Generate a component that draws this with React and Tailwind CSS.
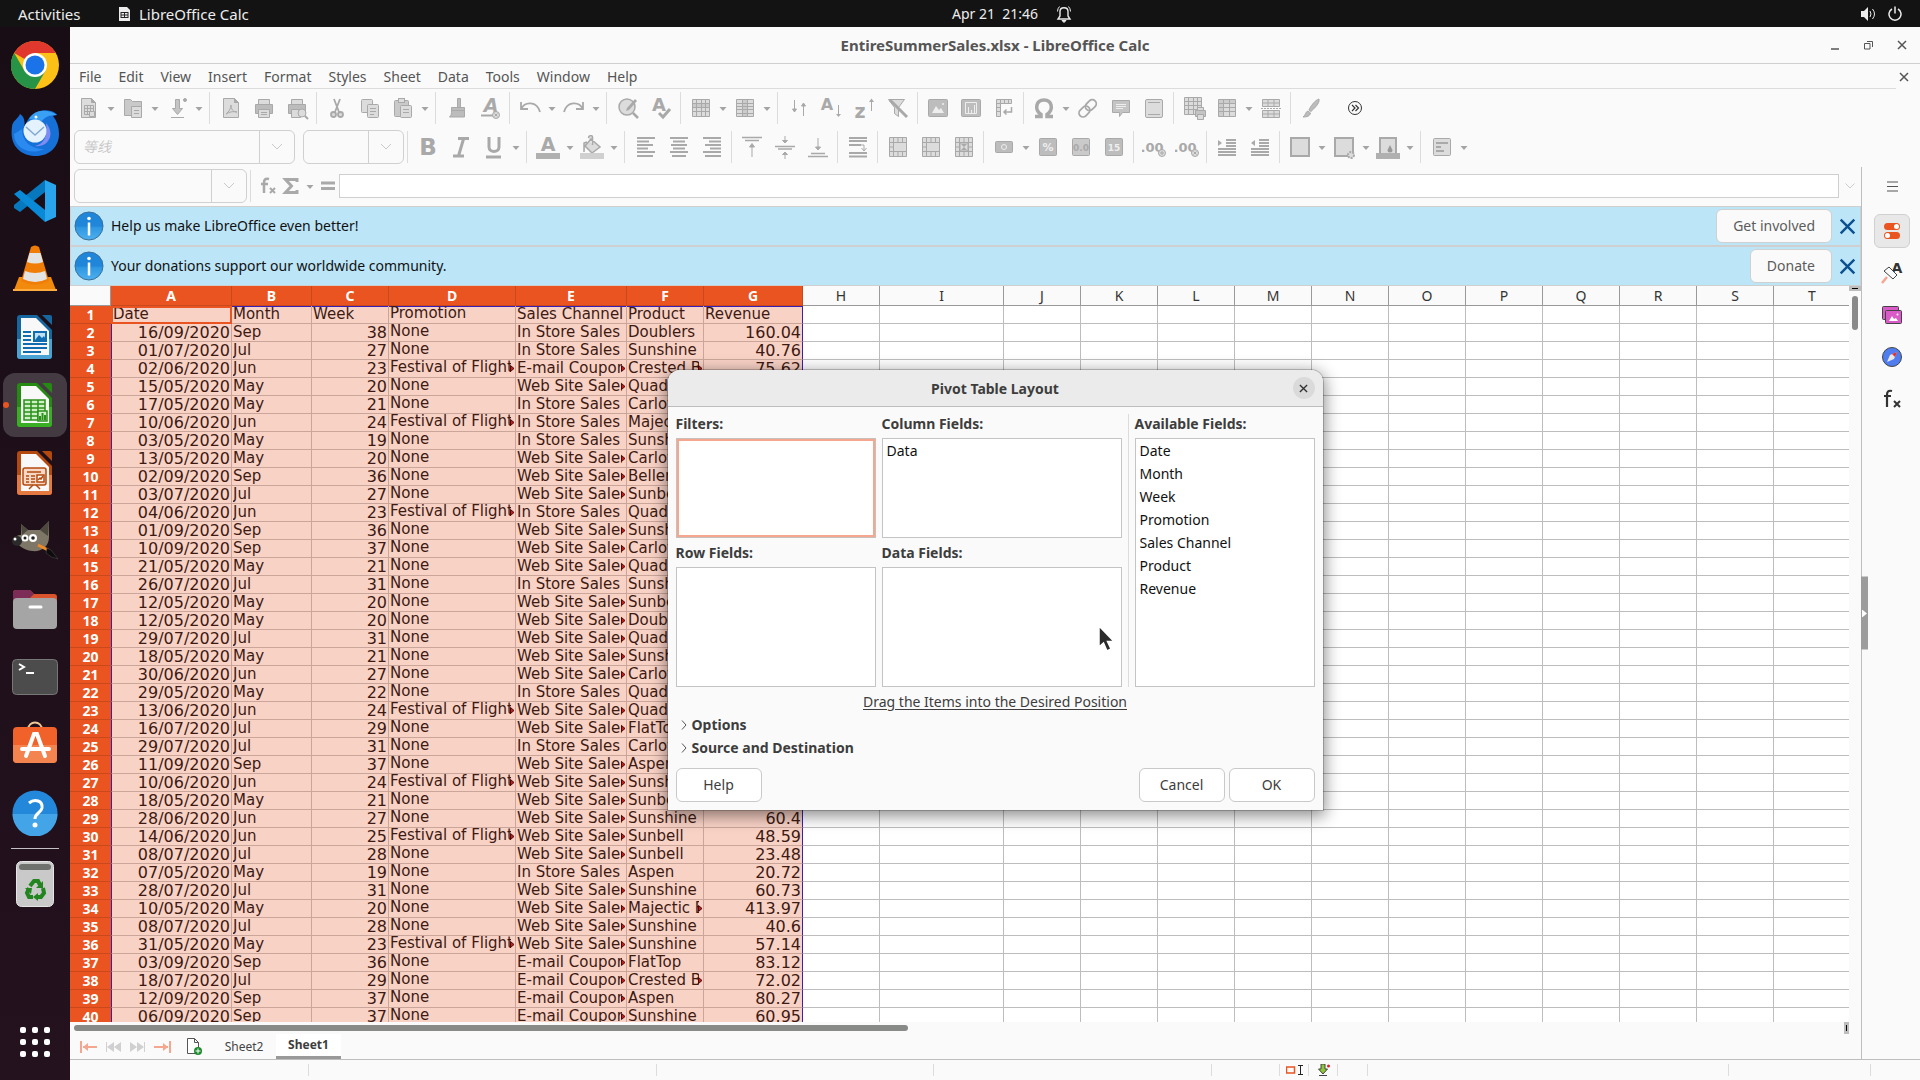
import React, { useState } from 'react';

const F = 'Festival of Flight';
const N = 'None';
const W = 'Web Site Sales';
const S = 'In Store Sales';
const E = 'E-mail Coupon';

// date, month, week, promotion, channel, product, revenue
const rows = [
  ['16/09/2020', 'Sep', 38, N, S, 'Doublers', '160.04'],
  ['01/07/2020', 'Jul', 27, N, S, 'Sunshine', '40.76'],
  ['02/06/2020', 'Jun', 23, F, E, 'Crested Beaut', '75.62'],
  ['15/05/2020', 'May', 20, N, W, 'Quad', ''],
  ['17/05/2020', 'May', 21, N, S, 'Carlota', ''],
  ['10/06/2020', 'Jun', 24, F, S, 'Majectic Beaut', ''],
  ['03/05/2020', 'May', 19, N, S, 'Sunshine', ''],
  ['13/05/2020', 'May', 20, N, W, 'Carlota', ''],
  ['02/09/2020', 'Sep', 36, N, W, 'Bellen', ''],
  ['03/07/2020', 'Jul', 27, N, W, 'Sunbell', ''],
  ['04/06/2020', 'Jun', 23, F, S, 'Quad', ''],
  ['01/09/2020', 'Sep', 36, N, W, 'Sunshine', ''],
  ['10/09/2020', 'Sep', 37, N, W, 'Carlota', ''],
  ['21/05/2020', 'May', 21, N, W, 'Quad', ''],
  ['26/07/2020', 'Jul', 31, N, S, 'Sunshine', ''],
  ['12/05/2020', 'May', 20, N, W, 'Sunbell', ''],
  ['12/05/2020', 'May', 20, N, W, 'Doublers', ''],
  ['29/07/2020', 'Jul', 31, N, W, 'Quad', ''],
  ['18/05/2020', 'May', 21, N, W, 'Sunshine', ''],
  ['30/06/2020', 'Jun', 27, N, W, 'Carlota', ''],
  ['29/05/2020', 'May', 22, N, S, 'Quad', ''],
  ['13/06/2020', 'Jun', 24, F, W, 'Quad', ''],
  ['16/07/2020', 'Jul', 29, N, W, 'FlatTop', ''],
  ['29/07/2020', 'Jul', 31, N, S, 'Carlota', ''],
  ['11/09/2020', 'Sep', 37, N, W, 'Aspen', ''],
  ['10/06/2020', 'Jun', 24, F, W, 'Sunshine', ''],
  ['18/05/2020', 'May', 21, N, W, 'Sunbell', ''],
  ['28/06/2020', 'Jun', 27, N, W, 'Sunshine', '60.4'],
  ['14/06/2020', 'Jun', 25, F, W, 'Sunbell', '48.59'],
  ['08/07/2020', 'Jul', 28, N, W, 'Sunbell', '23.48'],
  ['07/05/2020', 'May', 19, N, S, 'Aspen', '20.72'],
  ['28/07/2020', 'Jul', 31, N, W, 'Sunshine', '60.73'],
  ['10/05/2020', 'May', 20, N, W, 'Majectic Beaut', '413.97'],
  ['08/07/2020', 'Jul', 28, N, W, 'Sunshine', '40.6'],
  ['31/05/2020', 'May', 23, F, W, 'Sunshine', '57.14'],
  ['03/09/2020', 'Sep', 36, N, E, 'FlatTop', '83.12'],
  ['18/07/2020', 'Jul', 29, N, E, 'Crested Beaut', '72.02'],
  ['12/09/2020', 'Sep', 37, N, E, 'Aspen', '80.27'],
  ['06/09/2020', 'Sep', 37, N, E, 'Sunshine', '60.95'],
];

const header = ['Date', 'Month', 'Week', 'Promotion', 'Sales Channel', 'Product', 'Revenue'];
const fields = header;
const emptyCols = ['H', 'I', 'J', 'K', 'L', 'M', 'N', 'O', 'P', 'Q', 'R', 'S', 'T'];
const menus = ['File', 'Edit', 'View', 'Insert', 'Format', 'Styles', 'Sheet', 'Data', 'Tools', 'Window', 'Help'];

const D = '#a9a9a9';
const L = '#dcdcdc';

const Glyph = ({ x = 12, y = 18, size = 19, children, italic, fill = D }) => (
  <text x={x} y={y} fontSize={size} fontWeight="700" fontStyle={italic ? 'italic' : 'normal'} textAnchor="middle" fill={fill} fontFamily="DejaVu Sans, sans-serif">
    {children}
  </text>
);

const Badge = ({ x, y, plus }) => (
  <g>
    <circle cx={x} cy={y} r="3.5" fill={L} stroke={D} />
    <path d={plus ? `M${x - 2} ${y}h4M${x} ${y - 2}v4` : `M${x - 1.5} ${y - 1.5}l3 3m0-3l-3 3`} stroke={D} />
  </g>
);

const lines = (list) => <path d={list.map(([x, y, w]) => `M${x} ${y}h${w}`).join('')} stroke={D} strokeWidth="1.8" />;

const icons = {
  newDoc: (
    <g fill={L} stroke={D}>
      <path d="M4.5 2.5h10l4 4v15h-14z" />
      <path d="M14.5 2.5v4h4" fill={D} />
      <path d="M7.5 9.5h9v9h-9zM7.5 12.5h9M7.5 15.5h9M10.5 9.5v9M13.5 9.5v9" />
      <path d="M12.5 15.5h5v5h-5z" />
    </g>
  ),
  open: (
    <g fill={L} stroke={D}>
      <path d="M3.5 19.5v-16h6l2 2h9v14z" fill="#c9c9c9" />
      <path d="M10.5 10.5h10v11h-10z" />
      <path d="M13 14.5h5M13 17.5h5" />
    </g>
  ),
  save: (
    <g fill={D} stroke={D}>
      <path d="M10.5 3.5h4v9h3l-5 6-5-6h3z" fill="#c4c4c4" />
      <path d="M6 21.5h13" />
      <circle cx="20" cy="4" r="1.5" />
    </g>
  ),
  pdf: (
    <g fill={L} stroke={D}>
      <path d="M4.5 2.5h11l4 4v15h-15z" />
      <path d="M15.5 2.5v4h4" fill={D} />
      <path d="M7 18c3-2 5-6 5-9 0 4 2 7 6 7-4-1-8 0-11 2z" fill="none" />
    </g>
  ),
  print: (
    <g fill={L} stroke={D}>
      <path d="M6.5 3.5h11v5h-11z" />
      <path d="M3.5 8.5h17v9h-17z" fill="#bcbcbc" />
      <path d="M6.5 13.5h11v8h-11zM9 16.5h6M9 18.5h6" />
    </g>
  ),
  preview: (
    <g fill={L} stroke={D}>
      <path d="M6.5 3.5h11v5h-11z" />
      <path d="M3.5 8.5h17v9h-17z" fill="#bcbcbc" />
      <path d="M6.5 13.5h9v8h-9z" />
      <circle cx="17" cy="17" r="4" />
      <path d="M20 20l3 3" strokeWidth="2" />
    </g>
  ),
  cut: (
    <g fill={L} stroke={D} strokeWidth="1.8">
      <path d="M9 3l5 13M15 3l-5 13" />
      <circle cx="8.5" cy="18.5" r="2.5" />
      <circle cx="15.5" cy="18.5" r="2.5" />
    </g>
  ),
  copy: (
    <g fill={L} stroke={D}>
      <rect x="3.5" y="3.5" width="11" height="13" rx="1" />
      <rect x="9.5" y="8.5" width="11" height="13" rx="1" />
      <path d="M12 12.5h6M12 15.5h6M12 18.5h4" />
    </g>
  ),
  paste: (
    <g fill={L} stroke={D}>
      <rect x="3.5" y="4.5" width="14" height="16" rx="1" fill="#c9c9c9" />
      <rect x="7.5" y="2.5" width="6" height="4" />
      <rect x="9.5" y="9.5" width="11" height="12" rx="1" />
      <path d="M12 13.5h6M12 16.5h6" />
    </g>
  ),
  clone: (
    <g fill="#bcbcbc" stroke={D}>
      <path d="M12.5 2.5h3v9h-3z" />
      <path d="M6.5 11.5h13v3h-13zM6.5 14.5h13v6.5h-15c2-2 2-3 2-6.5z" />
    </g>
  ),
  clear: (
    <g>
      <Glyph italic x={13} y={16} size={19}>A</Glyph>
      <path d="M3 19.5h12" stroke={D} strokeWidth="2" />
      <Badge x={18} y={19} />
    </g>
  ),
  undo: <path d="M3 6v7h7M3 13c4-8 16-8 19 3" fill="none" stroke={D} strokeWidth="1.8" />,
  redo: <path d="M21 6v7h-7M21 13c-4-8-16-8-19 3" fill="none" stroke={D} strokeWidth="1.8" />,
  find: (
    <g fill={L} stroke={D} strokeWidth="1.5">
      <circle cx="11" cy="11" r="8" />
      <path d="M17 17l5 5" strokeWidth="2.5" />
      <path d="M19 3l-8 9-1 3 3-1 8-9z" fill={D} stroke="none" />
    </g>
  ),
  spell: (
    <g>
      <Glyph x={10} y={15} size={18}>A</Glyph>
      <path d="M10 17l4 4 7-8" fill="none" stroke={D} strokeWidth="3" />
    </g>
  ),
  row: (
    <g fill={L} stroke={D}>
      <path d="M3.5 3.5h17v17h-17zM3.5 7.5h17M3.5 11.5h17M3.5 15.5h17M7.5 3.5v17M12.5 3.5v17M16.5 3.5v17" />
      <path d="M4 8h16v3H4z" fill={D} fillOpacity=".35" stroke="none" />
    </g>
  ),
  col: (
    <g fill={L} stroke={D}>
      <path d="M3.5 3.5h17v17h-17zM3.5 7.5h17M3.5 10.5h17M3.5 13.5h17M3.5 17.5h17M9.5 3.5v17M14.5 3.5v17" />
      <path d="M10 4h4v16h-4z" fill={D} fillOpacity=".35" stroke="none" />
    </g>
  ),
  sort: (
    <g fill={D} stroke={D}>
      <path d="M7.5 4v11M16.5 9v11" />
      <path d="M5.5 13h4l-2 3zM14.5 10h4l-2-3z" />
    </g>
  ),
  asc: (
    <g fill={D}>
      <Glyph x={7} y={14} size={16}>A</Glyph>
      <path d="M18.5 9v11" stroke={D} />
      <path d="M16 18h5l-2.500 3z" />
    </g>
  ),
  desc: (
    <g fill={D}>
      <Glyph x={7} y={22} size={19}>z</Glyph>
      <path d="M18.5 3v12" stroke={D} />
      <path d="M16 6h5l-2.500-3.500z" />
    </g>
  ),
  filter: (
    <g fill={L} stroke={D}>
      <path d="M2.5 3.5h16l-6 8v9l-4-3v-6z" />
      <path d="M4 4l17 17" strokeWidth="3" />
    </g>
  ),
  image: (
    <g>
      <rect x="2.5" y="3.5" width="19" height="17" rx="1" fill="#bdbdbd" stroke={D} />
      <path d="M6 17l4-7 3 4 2-2 3 5z" fill="#eee" />
      <circle cx="17" cy="8" r="1" fill="#eee" />
    </g>
  ),
  chart: (
    <g>
      <rect x="2.5" y="3.5" width="19" height="17" rx="1" fill="#bdbdbd" stroke={D} />
      <path d="M6.5 6.5v11h11M6.5 6.5h11v11M9.5 17v-6M12.5 17v-3M15.5 17V9" fill="none" stroke="#eee" />
    </g>
  ),
  pivot: (
    <g fill={L} stroke={D}>
      <path d="M4.5 3.5h15v4h-11v13h-4zM8.5 3.5v4h-4M12.5 3.5v4M16.5 3.5v4M4.5 11.5h4M4.5 15.5h4" />
      <path d="M19.5 11v5h-7m2-2.500l-2.500 2.500 2.500 2.500" fill="none" strokeWidth="1.5" />
    </g>
  ),
  omega: <path d="M3 20.5h6v-2c-7-5-5-14.500 3-14.500s10 9.500 3 14.500v2h6" fill="none" stroke={D} strokeWidth="3.500" />,
  link: (
    <g fill="none" stroke={D} strokeWidth="1.8" transform="rotate(-45 12 12)">
      <rect x="1" y="8" width="12" height="8" rx="4" />
      <rect x="10" y="8" width="12" height="8" rx="4" />
    </g>
  ),
  comment: (
    <g fill="#c4c4c4" stroke={D}>
      <path d="M3.5 4.5h17v12h-7l-3 4v-4h-7z" />
      <path d="M7 8.5h10M7 10.5h10M7 12.5h7" stroke="#eee" />
    </g>
  ),
  headfoot: (
    <g fill={L} stroke={D}>
      <rect x="3.5" y="3.5" width="17" height="18" rx="1.5" />
      <path d="M6 6.5h12M6 18.5h12" />
    </g>
  ),
  printArea: (
    <g fill={L} stroke={D}>
      <path d="M2.5 1.5h17v17h-17zM2.5 5.5h17M2.5 9.5h17M2.5 13.5h17M6.5 1.5v17M11.5 1.5v17M15.5 1.5v17" />
      <path d="M13.5 14.5h10v6h-10z" fill="#c4c4c4" />
      <path d="M15.5 11.5h6v3h-6zM15.5 18.5h6v5h-6z" />
    </g>
  ),
  freeze: (
    <g fill={L} stroke={D}>
      <path d="M3.5 3.5h17v17h-17zM3.5 7.5h17M3.5 11.5h17M3.5 15.5h17M8.5 3.5v17M14.5 3.5v17" />
      <path d="M4 4h16v3H4zM4 8h4v12H4z" fill={D} fillOpacity=".3" stroke="none" />
    </g>
  ),
  split: (
    <g fill={L} stroke={D}>
      <path d="M3.5 3.5h17v7h-17zM3.5 7h17M9 3.5v7M15 3.5v7M3.5 14.5h17v7h-17zM3.5 18h17M9 14.5v7M15 14.5v7" />
      <path d="M2 12.5h20" strokeDasharray="2 1" />
    </g>
  ),
  draw: <path d="M20 3c-4 1-9 8-10 11l2 1.500c3-3 9-8 8-12.500zM9 15c-3 1-2 4-5 6 4 0 7-1 7.500-4z" fill="#bcbcbc" stroke={D} />,
  bold: <Glyph y={20} size={23}>B</Glyph>,
  italic: <path d="M9 3.500h11M4 21h11M14.500 4L9.500 21" stroke={D} strokeWidth="3" />,
  underline: <path d="M7 2v10c0 6 10 6 10 0V2M4 22h15" fill="none" stroke={D} strokeWidth="3" />,
  fontColor: (
    <g>
      <Glyph y={16} size={19}>A</Glyph>
      <path d="M0 18h24v6H0z" fill="#b0b0b0" />
    </g>
  ),
  fillColor: (
    <g fill={L} stroke={D} strokeWidth="1.500">
      <path d="M11 4l9 8-8 6-7-7zM12.500 10V2c0-2-4-2-4 1M4 17V8l3-1" />
      <path d="M0 18h24v6H0z" fill="#d0d0d0" stroke="none" />
    </g>
  ),
  alignL: lines([[3, 3, 18], [3, 6.5, 12], [3, 10, 16], [3, 13.5, 11], [3, 17, 18], [3, 21, 16]]),
  alignC: lines([[3, 3, 18], [6, 6.5, 12], [4, 10, 16], [6, 13.5, 12], [3, 17, 18], [5, 21, 14]]),
  alignR: lines([[3, 3, 18], [9, 6.5, 12], [5, 10, 16], [10, 13.5, 11], [3, 17, 18], [5, 21, 16]]),
  top: (
    <g fill={D} stroke={D}>
      <path d="M2 2.5h20M5 5.5h14" strokeWidth="1.500" />
      <path d="M12 10v12M9.500 12h5L12 8.5z" />
    </g>
  ),
  middle: (
    <g fill={D} stroke={D}>
      <path d="M2 11.5h20M5 14h14" strokeWidth="1.500" />
      <path d="M12 1v6M12 18v6M9.500 5.5h5L12 8zM9.500 19.5h5L12 17z" />
    </g>
  ),
  bottom: (
    <g fill={D} stroke={D}>
      <path d="M5 18.5h14M2 21.5h20" strokeWidth="1.500" />
      <path d="M12 3v11M9.500 12h5L12 15z" />
    </g>
  ),
  wrap: (
    <g fill="none" stroke={D} strokeWidth="1.8">
      <path d="M3 3h18M3 6h18M3 10h12M3 18h18M3 21.5h18" />
      <path d="M8 10h10v5m-2.500-2l2.500 3 2.500-3" strokeWidth="1" />
    </g>
  ),
  merge: (
    <g fill={L} stroke={D}>
      <path d="M3.5 2.5h17v19h-17zM3.5 7.5h17M3.5 16.5h17M3.5 12h4M7.5 2.5v19M12 2.5v5M12 16.5v5M16.5 2.5v5M16.5 16.5v5" />
    </g>
  ),
  mergeMid: (
    <g fill={L} stroke={D}>
      <path d="M3.5 2.5h17v19h-17zM3.5 7.5h17M3.5 16.5h17M3.5 12h17M7.5 2.5v19M12 2.5v19M16.5 2.5v19" />
      <path d="M8 8h8v8H8z" />
      <path d="M9 9h6l-3 3 3 3H9l3-3z" fill={D} stroke="none" />
    </g>
  ),
  currency: (
    <g>
      <rect x="3.5" y="6.5" width="17" height="11" rx="1" fill="#bdbdbd" stroke={D} />
      <circle cx="12" cy="12" r="2.5" fill="none" stroke="#eee" />
    </g>
  ),
  percent: (
    <g>
      <rect x="3.5" y="3.5" width="17" height="17" rx="1" fill="#bdbdbd" stroke={D} />
      <Glyph y={16} size={11} fill="#eee">%</Glyph>
    </g>
  ),
  number: (
    <g>
      <rect x="3.5" y="3.5" width="17" height="17" rx="1" fill="#cacaca" stroke={D} />
      <Glyph y={16} size={9}>0.0</Glyph>
    </g>
  ),
  date: (
    <g>
      <rect x="3.5" y="3.5" width="17" height="17" rx="1" fill="#bdbdbd" stroke={D} />
      <Glyph y={16} size={9} fill="#eee">15</Glyph>
    </g>
  ),
  addDec: (
    <g>
      <Glyph x={10} y={17} size={13}>.00</Glyph>
      <Badge x={20} y={18} plus />
    </g>
  ),
  delDec: (
    <g>
      <Glyph x={10} y={17} size={13}>.00</Glyph>
      <Badge x={20} y={18} />
    </g>
  ),
  indent: (
    <g fill={D}>
      {lines([[11, 5, 10], [11, 8, 10], [11, 11, 10], [3, 14, 18], [3, 17, 18], [3, 20, 18]])}
      <path d="M3 5v6l4-3z" />
    </g>
  ),
  outdent: (
    <g fill={D}>
      {lines([[11, 5, 10], [11, 8, 10], [11, 11, 10], [3, 14, 18], [3, 17, 18], [3, 20, 18]])}
      <path d="M7 5v6L3 8z" />
    </g>
  ),
  borders: <path d="M3 3h18v18H3z" fill={L} stroke={D} strokeWidth="2" />,
  borderStyle: (
    <g>
      <path d="M3 3h18v18H3z" fill={L} stroke={D} strokeWidth="2" />
      <circle cx="19" cy="20" r="3" fill={L} stroke={D} strokeWidth="2" strokeDasharray="2 1" />
    </g>
  ),
  borderColor: (
    <g>
      <path d="M4 3h16v16H4z" fill={L} stroke={D} strokeWidth="2" />
      <path d="M14 10l2.500 5a2.500 2.500 0 1 1-5 0z" fill="#999" />
      <path d="M0 18h24v6H0z" fill="#b0b0b0" />
    </g>
  ),
  conditional: (
    <g>
      <rect x="3.5" y="3.5" width="17" height="17" rx="1" fill={L} stroke={D} />
      <path d="M6 8h12M6 12h5M6 16h8" stroke={D} strokeWidth="2" />
    </g>
  ),
  fx: (
    <g>
      <path d="M12 5c-4-1-5 1-5 4v10M4 10h7" fill="none" stroke={D} strokeWidth="2.500" />
      <path d="M13 14l5 5m0-5l-5 5" stroke={D} strokeWidth="2" />
    </g>
  ),
  sum: <path d="M18 8V5.5H6.5l6 6.500-6 6.500H18V16" fill="none" stroke={D} strokeWidth="3" />,
  equals: <path d="M5 9h14M5 14.500h14" stroke={D} strokeWidth="3" />,
};

// "v" is a drop arrow, "|" a separator, "||" a separator that follows a drop arrow
const standardBar = ['newDoc', 'v', 'open', 'v', 'save', 'v', '||', 'pdf', 'print', 'preview', '|', 'cut', 'copy', 'paste', 'v', '||', 'clone', 'clear', '|', 'undo', 'v', 'redo', 'v', '||', 'find', 'spell', '|', 'row', 'v', 'col', 'v', '||', 'sort', 'asc', 'desc', 'filter', '|', 'image', 'chart', 'pivot', '|', 'omega', 'v', 'link', 'comment', 'headfoot', '|', 'printArea', 'freeze', 'v', 'split', '|', 'draw'];
const formatBar = ['|', 'bold', 'italic', 'underline', 'v', '||', 'fontColor', 'v', 'fillColor', 'v', '||', 'alignL', 'alignC', 'alignR', '|', 'top', 'middle', 'bottom', '|', 'wrap', '|', 'merge', 'merge', 'mergeMid', '|', 'currency', 'v', 'percent', 'number', 'date', '|', 'addDec', 'delDec', '|', 'indent', 'outdent', '|', 'borders', 'v', 'borderStyle', 'v', 'borderColor', 'v', '||', 'conditional', 'v'];

const Tool = ({ name }) => (
  <button type="button" aria-label={name} className="flex w-[33px] h-8 shrink-0 items-center justify-center">
    <svg width="24" height="24" viewBox="0 0 24 24">{icons[name]}</svg>
  </button>
);

const DropArrow = () => (
  <button type="button" aria-label="more" className="flex w-[11px] h-8 shrink-0 items-center justify-center">
    <svg width="8" height="8" viewBox="0 0 8 8"><path d="M0.5 3h7L4 7z" fill="#a4a4a4" /></svg>
  </button>
);

const Bar = ({ items }) => items.map((item, i) => {
  if (item === 'v') return <DropArrow key={i} />;
  if (item === '|') return <span key={i} className="w-[7px] shrink-0 h-8 flex justify-center"><span className="w-px bg-[#dcdcdc]" /></span>;
  if (item === '||') return <span key={i} className="w-[10px] shrink-0 h-8 flex justify-center"><span className="w-px bg-[#dcdcdc]" /></span>;
  return <Tool key={i} name={item} />;
});

const Combo = ({ label, value, width }) => (
  <div className={`flex h-[34px] shrink-0 rounded-md border border-[#d0d0d0] bg-[#fafafa] ${width}`}>
    <input aria-label={label} defaultValue={value} className="min-w-0 flex-1 px-2 text-sm italic text-[#c8c8c8] outline-none" />
    <button type="button" aria-label={label + ' list'} className="flex w-[35px] items-center justify-center border-l border-[#d0d0d0]">
      <svg width="12" height="8" viewBox="0 0 12 8"><path d="M1 1l5 5 5-5" fill="none" stroke="#c8c8c8" /></svg>
    </button>
  </div>
);

const Cross = ({ size = 10, color = '#555', stroke = 1.5 }) => (
  <svg width={size} height={size} viewBox="0 0 10 10"><path d="M1 1l8 8M9 1L1 9" stroke={color} strokeWidth={stroke} /></svg>
);

const InfoBar = ({ text, action }) => (
  <div className="flex h-10 shrink-0 items-center border border-[#cfcfcf] bg-[#bce5f7] pl-[3px] pr-1">
    <svg width="30" height="30" viewBox="0 0 30 30" className="mr-[7px]">
      <defs>
        <linearGradient id="info" x1="0" y1="0" x2="0" y2="1">
          <stop offset="0.5" stopColor="#1f86da" />
          <stop offset="0.55" stopColor="#2f97e2" />
          <stop offset="1" stopColor="#4eb0ee" />
        </linearGradient>
      </defs>
      <circle cx="15" cy="15" r="14" fill="url(#info)" stroke="#3a6f9a" />
      <circle cx="15" cy="7.5" r="1.8" fill="#fff" />
      <path d="M15 11.5v13" stroke="#fff" strokeWidth="2.5" />
    </svg>
    <span className="flex-1 text-sm text-[#111]">{text}</span>
    <button type="button" className="h-[34px] rounded-md border border-[#d0d0d0] bg-[#fafafa] px-4 text-sm text-[#5c5c5c]">{action}</button>
    <button type="button" aria-label="Close" className="ml-[7px]">
      <Cross size={17} color="#0a4f8f" stroke={1.4} />
    </button>
  </div>
);

const docIcon = (dark, light, inner) => (
  <svg width="48" height="48" viewBox="0 0 48 48">
    <path d="M9 2h17l15 15v26q0 3-3 3H9q-3 0-3-3V5q0-3 3-3z" fill={dark} />
    <path d="M6 26h35v17q0 3-3 3H9q-3 0-3-3z" fill={light} />
    <path d="M10 5h15l13 13v24H10z" fill="#f8f8f8" />
    <path d="M31 2h8q2 0 2 2v8z" fill={dark} />
    {inner}
  </svg>
);

const dockApps = [
  ['Google Chrome', (
    <svg width="48" height="48" viewBox="0 0 48 48">
      <circle cx="24" cy="24" r="24" fill="#fbc116" />
      <path d="M24 24L3.2 12A24 24 0 0 1 44.8 12H24z" fill="#e0382c" />
      <path d="M3.2 12A24 24 0 0 0 24 48l10.400-18L24 24 13.600 30z" fill="#269347" />
      <circle cx="24" cy="24" r="12" fill="#fff" />
      <circle cx="24" cy="24" r="9.5" fill="#1a73e8" />
    </svg>
  )],
  ['Thunderbird', (
    <svg width="48" height="48" viewBox="0 0 48 48">
      <path d="M1 18c0-6 6-8 8-13 6 4 4 10 5 13C17 4 30-1 40 2c3 1 5 2 6 4l-4 1c4 5 6 11 6 18 0 13-10 22-23 22S-2 39 1 18z" fill="#1570d8" />
      <path d="M18 10c5-9 17-11 28-4-8 0-12 2-15 6z" fill="#3aa0f4" />
      <path d="M3 25c0 14 16 22 30 15-14 0-22-8-22-20z" fill="#2a8af0" />
      <path d="M35 14c10 11 2 25-11 23 9-2 13-10 11-23z" fill="#7f8df2" />
      <circle cx="24" cy="22" r="11.5" fill="#e3f2fd" />
      <path d="M15 18l9 8 9-8" fill="none" stroke="#84a9cf" strokeWidth="1.5" />
      <circle cx="25" cy="8" r="1.5" fill="#fff" />
    </svg>
  )],
  ['Visual Studio Code', (
    <svg width="42" height="42" viewBox="0 0 42 42">
      <path d="M31 0v12L6 32 0 28v-3z" fill="#0878be" />
      <path d="M0 14l6-4 25 20v12z" fill="#0a8ad6" />
      <path d="M31 0l11 5v32l-11 5z" fill="#29a5ee" />
    </svg>
  )],
  ['VLC', (
    <svg width="46" height="48" viewBox="0 0 46 48">
      <path d="M7 32h32l5 13H2z" fill="#f18a0d" />
      <path d="M19 2q4-3 8 0l10 34q-14 7-28 0z" fill="#f07d08" />
      <path d="M17.5 8h11l2.500 9q-8 3-16 0zM13 26q10 4 20 0l2 8q-12 6-24 0z" fill="#e3e3e3" />
      <path d="M1 44h44v2H1z" fill="#ffac3e" />
    </svg>
  )],
  ['LibreOffice Writer', docIcon('#16669f', '#4ba3d4', (
    <g stroke="#0f6db0" strokeWidth="2">
      <path d="M12 19h8M12 23h8M12 27h8M12 31h24M12 35h24M12 39h18" />
      <path d="M23 19h12v9H23z" fill="#bfe0f5" />
      <path d="M24 27l4-5 3 3 2-2 2 4z" fill="#0f6db0" stroke="none" />
    </g>
  ))],
  ['LibreOffice Calc', docIcon('#248a12', '#39b024', (
    <g stroke="#2b8f1b" strokeWidth="1.5" fill="#cdf0c4">
      <path d="M13 19h21v20H13zM13 23h21M13 27h21M13 31h21M13 35h21M20 19v20M27 19v20" />
      <path d="M27 30h9v10h-9z" />
      <path d="M29 39v-4M31.5 39v-7M34 39v-5" strokeWidth="2" />
    </g>
  ))],
  ['LibreOffice Impress', docIcon('#b3490f', '#e47a41', (
    <g stroke="#b3490f" strokeWidth="1.5" fill="#f8d8c4">
      <rect x="12" y="19" width="23" height="17" rx="2" />
      <path d="M16 23h14M15 27h3M15 30h3M15 33h3M20 27h4M20 30h4M20 33h4M22 36l-4 4M25 36l4 4" />
      <path d="M26 26h7v7h-7z" fill="#fff" />
      <path d="M27 31l2-2 1 1 2-3" fill="none" />
    </g>
  ))],
  ['GIMP', (
    <svg width="48" height="48" viewBox="0 3 48 48">
      <path d="M10 10l7 6h12l9-9v16c0 10-8 15-17 14S6 30 4 26c-2-3 3-5 6-5z" fill="#7e7767" />
      <path d="M10 10l7 6-6 5zM38 7l-9 9 8 6z" fill="#4d483e" />
      <circle cx="6" cy="27" r="5" fill="#2b2b2b" />
      <circle cx="4" cy="25" r="1.5" fill="#fff" />
      <circle cx="14" cy="24" r="3.5" fill="#fff" />
      <circle cx="22" cy="24" r="4" fill="#fff" />
      <circle cx="14" cy="24" r="1.5" fill="#222" />
      <circle cx="22" cy="24" r="1.8" fill="#222" />
      <path d="M27 31l10 5" stroke="#ee8a28" strokeWidth="3" />
      <path d="M36 34l4 2 7 9q-7-1-12-6z" fill="#0c0c0c" stroke="#555" strokeWidth=".5" />
    </svg>
  )],
  ['Files', (
    <svg width="46" height="42" viewBox="0 0 46 42">
      <path d="M1 20V5q0-3 3-3h14l4 4h20q3 0 3 3v11z" fill="#d9532c" />
      <path d="M1 20V5q0-3 3-3h14l4 4-6 6z" fill="#7d2c58" />
      <rect x="1" y="10" width="44" height="31" rx="4" fill="#a5a5a5" />
      <path d="M18 19h11" stroke="#fff" strokeWidth="3" strokeLinecap="round" />
    </svg>
  )],
  ['Terminal', (
    <svg width="46" height="36" viewBox="0 0 46 36">
      <rect x=".5" y=".5" width="45" height="35" rx="4" fill="#4c4c4c" stroke="#777" />
      <path d="M7 5l5 3-5 3M14 14h8" fill="none" stroke="#fff" strokeWidth="2" />
    </svg>
  )],
  ['Ubuntu Software', (
    <svg width="46" height="50" viewBox="0 0 46 50">
      <path d="M16 10c0-10 14-10 14 0" fill="none" stroke="#f0c896" strokeWidth="2" />
      <rect x="1" y="7" width="44" height="36" rx="4" fill="#f0622a" />
      <path d="M1 25h44v14q0 4-4 4H5q-4 0-4-4z" fill="#f3834f" />
      <path d="M14 36l8-22h3l8 22M10 29h27" fill="none" stroke="#fff" strokeWidth="4" strokeLinecap="round" />
    </svg>
  )],
  ['Help', (
    <svg width="46" height="46" viewBox="0 0 46 46">
      <circle cx="23" cy="23" r="22.5" fill="#2488da" />
      <path d="M.5 24h45a22.500 22.500 0 0 1-45 0z" fill="#43a5e8" />
      <path d="M17 13c6-5 14-2 13 5-1 5-7 5-7 11" fill="none" stroke="#fff" strokeWidth="3" />
      <circle cx="23" cy="35" r="2.5" fill="#fff" />
    </svg>
  )],
];

const Dock = () => (
  <nav aria-label="Dock" className="flex w-[70px] shrink-0 flex-col items-center bg-linear-to-b from-[#190d15] to-[#24121f] pt-1">
    {dockApps.map(([name, icon]) => (
      <button
        type="button"
        key={name}
        aria-label={name}
        className={'relative my-[2px] flex h-16 w-16 shrink-0 items-center justify-center rounded-xl ' + (name === 'LibreOffice Calc' ? 'bg-[#443a42]' : '')}
      >
        {icon}
        {name === 'LibreOffice Calc' && <span className="absolute left-0 size-[6px] rounded-full bg-[#e95420]" />}
      </button>
    ))}
    <hr className="my-px w-12 border-[#c4c0c3]" />
    <button type="button" aria-label="Trash" className="my-[2px] flex h-16 w-16 items-center justify-center">
      <svg width="38" height="46" viewBox="0 0 38 46">
        <rect x=".5" y=".5" width="37" height="45" rx="5" fill="#c9c9c9" stroke="#e6e6e6" />
        <rect x="3" y="3" width="32" height="6" rx="3" fill="#6f716e" />
        <g fill="none" stroke="#22851f" strokeWidth="4">
          <path d="M14 25l4-5h4l2 4M27 27l1 5-3 4h-4M17 36h-4l-2-4 2-5" />
        </g>
        <path d="M27 20v7h-7zM22 40v-8l-5 4zM9 27h7l-1 6z" fill="#22851f" />
      </svg>
    </button>
    <button type="button" aria-label="Show Applications" className="mt-auto mb-[23px] grid grid-cols-3 gap-[6px]">
      {Array.from({ length: 9 }, (_, i) => <span key={i} className="size-[6px] rounded-xs bg-white" />)}
    </button>
  </nav>
);

const TopBar = () => (
  <header className="grid h-[27px] shrink-0 grid-cols-3 items-center bg-[#131313] text-sm text-[#ececec]">
    <div className="flex items-center pl-[18px] text-[15px]/5">
      <button type="button" className="w-[100px] text-left">Activities</button>
      <svg width="13" height="16" viewBox="0 0 13 16" className="mr-2">
        <path d="M1 1h8l3 3v11H1z" fill="#ececec" />
        <path d="M3 6.5h7M3 9h7M3 11.5h7M3 6v6M6.5 6v6M10 6v6" stroke="#222" />
      </svg>
      <button type="button">LibreOffice Calc</button>
    </div>
    <div className="flex items-center justify-center gap-[18px] pl-[104px]">
      <span className="whitespace-pre">Apr 21  21:46</span>
      <svg width="16" height="18" viewBox="0 0 16 18" fill="none" stroke="#ececec">
        <path d="M2 14h12l-2-3V6.5c0-5-8-5-8 0V11z" strokeWidth="1.4" />
        <path d="M1.5 6.5q0-3 2-5M14.5 6.5q0-3-2-5" />
        <path d="M6 15.5h4l-2 2z" fill="#ececec" />
      </svg>
    </div>
    <div className="flex items-center justify-end gap-3 pr-[18px]">
      <svg width="16" height="16" viewBox="0 0 16 16">
        <path d="M1 5h3l4-4v14l-4-4H1z" fill="#ececec" />
        <path d="M10 5q2 3 0 6M12.5 3q4 5 0 10" fill="none" stroke="#ececec" />
      </svg>
      <svg width="14" height="16" viewBox="0 0 14 16" fill="none" stroke="#ececec" strokeWidth="1.5">
        <path d="M4 3a6 6 0 1 0 6 0M7 0.5v7" />
      </svg>
    </div>
  </header>
);

const OverflowMark = () => (
  <svg width="5" height="7" viewBox="0 0 5 7" className="absolute right-0 top-[5px]"><path d="M.5.5v6l3.500-3z" fill="#c81a1a" stroke="#4a0a0a" /></svg>
);

const isCut = (col, value) => (col === 3 && value === F) || (col === 4 && (value === W || value === E)) || (col === 5 && value.includes('Beaut'));

// Range columns A-G; numbers sit on the right
const Cell = ({ col, value, top }) => {
  const right = !top && (col === 0 || col === 2 || col === 6);
  const cut = !top && isCut(col, value);
  let cls = 'relative h-[18px] border-b border-r border-b-[#c9a699] bg-[#f9d2c6] p-0 text-[#3d1a12] ';
  cls += col === 6 ? 'border-r-[#3a1fb5] ' : 'border-r-[#c9a699] ';
  if (col === 0) cls += 'border-l border-l-[#3a1fb5] ';
  if (top && col > 0) cls += 'shadow-[inset_0_1px_#3a1fb5] ';
  if (top && col === 0) cls += 'outline-2 -outline-offset-2 outline-[#e95420] ';
  let box = 'h-[17px] overflow-hidden whitespace-nowrap ';
  box += right ? 'text-right text-base/[17px] ' : col === 3 ? 'text-left text-[15px]/[15px] ' : 'text-left text-[15px]/[17px] ';
  box += cut ? 'ml-px mr-1' : 'mx-px';
  return (
    <td className={cls}>
      <div className={box}>{value}</div>
      {cut && <OverflowMark />}
    </td>
  );
};

const Sheet = () => (
  <table className="w-[1780px] table-fixed border-separate border-spacing-0 font-['DejaVu_Sans',sans-serif]">
    <colgroup>
      <col className="w-[41px]" />
      <col className="w-[121px]" />
      <col className="w-[80px]" />
      <col className="w-[77px]" />
      <col className="w-[127px]" />
      <col className="w-[111px]" />
      <col className="w-[77px]" />
      <col className="w-[99px]" />
      <col className="w-[77px]" />
      <col className="w-[124px]" />
      {emptyCols.slice(2).map((c) => <col key={c} className="w-[77px]" />)}
    </colgroup>
    <thead className="font-['Noto_Sans',sans-serif] text-sm/4">
      <tr>
        <td className="h-5 bg-[#fafafa] border-r border-b border-[#999]" />
        {'ABCDEFG'.split('').map((c) => (
          <th key={c} scope="col" className="h-5 border-b border-r border-[#c9481c] bg-[#e95420] font-bold text-white">{c}</th>
        ))}
        {emptyCols.map((c) => (
          <th key={c} scope="col" className="h-5 border-b border-r border-[#999] bg-[#fafafa] font-normal text-[#333]">{c}</th>
        ))}
      </tr>
    </thead>
    <tbody>
      {[header, ...rows].map((row, r) => (
        <tr key={r}>
          <th scope="row" className="h-[18px] border-b border-[#c9481c] bg-[#e95420] p-0 font-['Noto_Sans',sans-serif] text-sm/[17px] font-bold text-white">{r + 1}</th>
          {row.map((value, c) => <Cell key={c} col={c} value={value} top={r === 0} />)}
          {emptyCols.map((c) => <td key={c} className="border-b border-r border-[#bdbdbd] bg-white p-0" />)}
        </tr>
      ))}
    </tbody>
  </table>
);

const FieldBox = ({ label, items = [], active, height, className = '' }) => (
  <section className={'flex flex-col ' + className}>
    <h3 className="py-[6px] text-sm/4 font-bold text-[#3d3d3d]">{label}</h3>
    <ul
      aria-label={label}
      tabIndex={0}
      className={'border bg-white px-1 text-sm/[23px] text-[#111] outline-none ' + height + (active ? ' border-[#c9c0bc] shadow-[inset_0_0_0_2px_#f4a68f]' : ' border-[#c4c4c4]')}
    >
      {items.map((item) => <li key={item}>{item}</li>)}
    </ul>
  </section>
);

const Expander = ({ label }) => (
  <button type="button" aria-expanded="false" className="flex h-[23px] items-center gap-[5px] pl-[5px] text-sm font-bold text-[#3d3d3d]">
    <svg width="6" height="10" viewBox="0 0 6 10"><path d="M1 .5L5 5 1 9.5" fill="none" stroke="#555" /></svg>
    {label}
  </button>
);

const dialogButton = 'h-[34px] w-[86px] rounded-md border border-[#c9c9c9] bg-white text-sm text-[#3d3d3d]';

const PivotDialog = ({ onClose }) => (
  <div role="dialog" aria-label="Pivot Table Layout" className="absolute inset-x-0 top-[343px] mx-auto w-[655px] rounded-t-xl bg-[#fafafa] shadow-[0_4px_16px_2px_rgba(0,0,0,0.45),0_0_0_1px_rgba(0,0,0,0.2)]">
    <div className="relative flex h-[37px] items-center justify-center rounded-t-xl border-b border-[#bdbdbd] bg-[#ebebeb]">
      <h2 className="pt-px text-sm font-bold text-[#3d3d3d]">Pivot Table Layout</h2>
      <button type="button" aria-label="Close" onClick={onClose} className="absolute right-2 top-[7px] flex size-[22px] items-center justify-center rounded-full bg-[#dadada]">
        <Cross size={9} color="#333" />
      </button>
    </div>
    <div className="px-2 pt-[3px] pb-2">
      <div className="flex">
        <div className="grid grid-cols-[200px_240px] gap-x-[6px] gap-y-px">
          <FieldBox label="Filters:" height="h-[100px]" active />
          <FieldBox label="Column Fields:" items={['Data']} height="h-[100px]" />
          <FieldBox label="Row Fields:" height="h-[120px]" />
          <FieldBox label="Data Fields:" height="h-[120px]" />
        </div>
        <div className="mx-[6px] mt-1 w-px bg-[#dcdcdc]" />
        <FieldBox label="Available Fields:" items={fields} height="flex-1" className="flex-1" />
      </div>
      <p className="pt-[7px] pb-[3px] text-center text-sm/4 text-[#3d3d3d] underline underline-offset-2">Drag the Items into the Desired Position</p>
      <Expander label="Options" />
      <Expander label="Source and Destination" />
      <div className="mt-[9px] flex gap-1">
        <button type="button" className={dialogButton + ' mr-auto'}>Help</button>
        <button type="button" className={dialogButton} onClick={onClose}>Cancel</button>
        <button type="button" className={dialogButton} onClick={onClose}>OK</button>
      </div>
    </div>
  </div>
);

const sideIcons = [
  ['Properties', (
    <g>
      <rect x="4" y="4" width="16" height="7" rx="3.5" fill="#e95420" />
      <rect x="4" y="13" width="16" height="7" rx="3.5" fill="#e95420" />
      <circle cx="16.5" cy="7.5" r="2.5" fill="#fff" />
      <circle cx="7.5" cy="16.5" r="2.5" fill="#fff" />
    </g>
  )],
  ['Styles', (
    <g>
      <Glyph x={17} y={12} size={14} fill="#333">A</Glyph>
      <path d="M4 10l5-4 8 8-4 4z" fill="#fafafa" stroke="#444" />
      <path d="M2 22l5-6" stroke="#f4a68f" strokeWidth="2.500" />
    </g>
  )],
  ['Gallery', (
    <g stroke="#444">
      <rect x="2.5" y="3.5" width="16" height="13" rx="1" fill="#d95bc8" />
      <rect x="5.5" y="7.5" width="16" height="13" rx="1" fill="#d95bc8" />
      <path d="M9 18l3-5 2 3 2-1 2 3z" fill="#fff" stroke="none" />
      <circle cx="17.5" cy="11.5" r="1" fill="#fff" stroke="none" />
    </g>
  )],
  ['Navigator', (
    <g>
      <circle cx="12" cy="12" r="9.5" fill="#4f7df0" stroke="#444" />
      <path d="M17 7l-3 7-7 3 3-7z" fill="#e8e8e8" />
      <path d="M17 7l-5 2 3 3z" fill="#e03030" />
    </g>
  )],
  ['Functions', (
    <g fill="none" stroke="#333">
      <path d="M12 4c-4-1-5 1-5 4v12M4 9h7" strokeWidth="2.2" />
      <path d="M14 14l6 6m0-6l-6 6" strokeWidth="2" />
    </g>
  )],
];

const Sidebar = () => (
  <aside className="relative flex w-[59px] shrink-0 flex-col items-center border-l border-[#bdbdbd] pl-[2px]">
    <button type="button" aria-label="Sidebar settings" className="flex h-[39px] w-9 items-center justify-center">
      <svg width="11" height="11" viewBox="0 0 11 11"><path d="M0 1h11M0 5.5h11M0 10h11" stroke="#555" /></svg>
    </button>
    {sideIcons.map(([name, icon]) => (
      <button
        type="button"
        key={name}
        aria-label={name}
        className={'mt-2 flex h-[34px] w-9 items-center justify-center rounded-md border ' + (name === 'Properties' ? 'border-[#d0d0d0] bg-[#e8e8e8]' : 'border-transparent')}
      >
        <svg width="24" height="24" viewBox="0 0 24 24">{icon}</svg>
      </button>
    ))}
    <button type="button" aria-label="Hide sidebar" className="absolute -left-px top-1/2 flex h-[73px] w-[7px] -translate-y-1/2 items-center bg-[#9c9c9c]">
      <svg width="6" height="8" viewBox="0 0 6 8"><path d="M1 0v8l5-4z" fill="#fff" /></svg>
    </button>
  </aside>
);

const SheetTabs = () => (
  <div className="flex h-[25px] items-center text-xs">
    <div className="flex items-center gap-[9px] pl-[10px]">
      <svg width="17" height="12" viewBox="0 0 17 12"><path d="M1 0v12M3 6h14" stroke="#f4a68f" strokeWidth="2" /><path d="M3 6l5-4v8z" fill="#f4a68f" /></svg>
      <svg width="15" height="10" viewBox="0 0 15 10"><path d="M0 0h1v10H0zM8 0v10L1 5zM15 0v10L8 5z" fill="#d0d0d0" /></svg>
      <svg width="15" height="10" viewBox="0 0 15 10"><path d="M14 0h1v10h-1zM7 0v10l7-5zM0 0v10l7-5z" fill="#d0d0d0" /></svg>
      <svg width="17" height="12" viewBox="0 0 17 12"><path d="M16 0v12M0 6h14" stroke="#f4a68f" strokeWidth="2" /><path d="M14 6l-5-4v8z" fill="#f4a68f" /></svg>
    </div>
    <button type="button" aria-label="Add sheet" className="ml-[15px]">
      <svg width="16" height="17" viewBox="0 0 16 17">
        <path d="M1.5.5h7l4 4v11h-11zM8.5.5v4h4" fill="#fff" stroke="#555" />
        <circle cx="12" cy="13" r="4" fill="#1d8a2c" />
        <path d="M12 10.5v5M9.5 13h5" stroke="#fff" />
      </svg>
    </button>
    <button type="button" className="ml-[10px] h-full w-16 text-[#444]">Sheet2</button>
    <button type="button" className="h-full w-[65px] border-b-3 border-[#999] bg-white font-bold text-[#3d3d3d]">Sheet1</button>
  </div>
);

const StatusBar = () => (
  <footer className="flex h-[21px] shrink-0 items-stretch border-t border-[#bdbdbd] py-1 [&>div]:border-[#dcdcdc] [&>div]:border-r [&>div]:flex [&>div]:items-center [&>div]:justify-center">
    <div className="grow-[239] basis-0" />
    <div className="grow-[348] basis-0" />
    <div className="grow-[277] basis-0" />
    <div className="grow-[278] basis-0" />
    <div className="w-[68px]" />
    <div className="w-[29px] pl-[2px]">
      <svg width="18" height="10" viewBox="0 0 18 10"><path d="M.5 2h8v6h-8z" fill="none" stroke="#e95420" strokeWidth="1.5" /><path d="M12 .5h5M14.5 0v10M12 9.5h5" stroke="#222" /></svg>
    </div>
    <div className="w-[29px] pl-[2px]">
      <svg width="12" height="12" viewBox="0 0 12 12"><path d="M3 0h4v5h2.500L5 10 .5 5H3z" fill="#8cc63a" stroke="#444" /><path d="M1 11.5h8" stroke="#444" /><circle cx="10.5" cy="2" r="1.5" fill="#d22" /></svg>
    </div>
    <div className="w-[30px]" />
    <div className="grow-[361] basis-0" />
    <div className="w-[142px]" />
    <span className="w-[49px]" />
  </footer>
);

const App = () => {
  const [open, setOpen] = useState(true);

  return (
    <div className="flex h-screen flex-col overflow-hidden font-['Noto_Sans','Noto_Sans_CJK_SC',sans-serif] text-sm">
      <TopBar />
      <div className="flex min-h-0 flex-1">
        <Dock />
        <main className="relative flex min-w-0 flex-1 flex-col bg-[#fafafa]">
          <div className="relative flex h-[37px] shrink-0 items-center justify-center border-b border-[#cfcfcf]">
            <h1 className="pt-px text-[15px] font-bold text-[#555]">EntireSummerSales.xlsx - LibreOffice Calc</h1>
            <div className="absolute right-[13px] flex items-center gap-6">
              <button type="button" aria-label="Minimize"><svg width="9" height="9" viewBox="0 0 9 9"><path d="M0 8h8" stroke="#555" strokeWidth="1.5" /></svg></button>
              <button type="button" aria-label="Restore"><svg width="9" height="9" viewBox="0 0 9 9"><path d="M.5 2.5h5.500v5.500H.5zM3 .5h5.500V6" fill="none" stroke="#555" /></svg></button>
              <button type="button" aria-label="Close"><Cross size={10} /></button>
            </div>
          </div>
          <div className="mr-6 flex h-[25px] shrink-0 items-center gap-[17px] border-b border-[#dcdcdc] pt-px pl-[9px] text-[#555]">
            {menus.map((m) => <button type="button" key={m}>{m}</button>)}
            <button type="button" aria-label="Close document" className="-mr-[13px] ml-auto"><Cross size={10} /></button>
          </div>
          <div className="flex h-[39px] shrink-0 items-center pb-[2px] pl-[2px]">
            <Bar items={standardBar} />
            <button type="button" aria-label="More tools" className="ml-[21px]">
              <svg width="14" height="14" viewBox="0 0 14 14"><circle cx="7" cy="7" r="6.5" fill="none" stroke="#333" /><path d="M4 4l3 3-3 3M7.5 4l3 3-3 3" fill="none" stroke="#333" strokeWidth="1.2" /></svg>
            </button>
          </div>
          <div className="flex h-[39px] shrink-0 items-center pb-[2px] pl-1">
            <Combo label="Font name" value="等线" width="w-[221px] mr-2" />
            <Combo label="Font size" value="" width="w-[101px]" />
            <Bar items={formatBar} />
          </div>
          <div className="flex min-h-0 flex-1">
            <div className="flex min-w-0 flex-1 flex-col">
              <div className="flex h-[39px] shrink-0 items-center pb-[2px] pl-1">
                <Combo label="Name box" value="" width="w-[173px]" />
                <Bar items={['|']} />
                <div className="-ml-[2px] flex -space-x-[11px]"><Tool name="fx" /><Tool name="sum" /></div>
                <div className="-ml-[3px] flex -space-x-1"><DropArrow /><Tool name="equals" /></div>
                <input aria-label="Formula" className="-ml-[5px] h-6 min-w-0 flex-1 border border-[#cfcfcf] bg-white outline-none" />
                <svg width="10" height="6" viewBox="0 0 10 6" className="mx-[6px]"><path d="M.5.5L5 5 9.5.5" fill="none" stroke="#ccc" /></svg>
              </div>
              <InfoBar text="Help us make LibreOffice even better!" action="Get involved" />
              <InfoBar text="Your donations support our worldwide community." action="Donate" />
              <div className="flex min-h-0 flex-1">
                <div className="min-w-0 flex-1 overflow-hidden"><Sheet /></div>
                <div className="flex w-3 shrink-0 flex-col items-center">
                  <span className="flex h-[5px] w-full items-center justify-center bg-[#bdbdbd]"><span className="h-px w-[6px] bg-black" /></span>
                  <span className="mt-[5px] h-[34px] w-[6px] rounded-sm bg-[#8a8a8a]" />
                </div>
              </div>
              <div className="flex h-3 shrink-0 items-center pl-1 pr-3">
                <span className="h-[6px] w-[47%] rounded-sm bg-[#888a88]" />
                <span className="ml-auto flex h-full w-[5px] items-center justify-center bg-[#bdbdbd]"><span className="h-[6px] w-px bg-black" /></span>
              </div>
              <SheetTabs />
            </div>
            <Sidebar />
          </div>
          <StatusBar />
          {open && <PivotDialog onClose={() => setOpen(false)} />}
          <svg width="18" height="28" viewBox="0 0 18 28" className="pointer-events-none absolute left-[1028px] top-[598px]">
            <path d="M1 1v21l4.500-4 3.500 8 4-2-3.500-7.500H16z" fill="#2b2b2b" stroke="#fff" strokeWidth="1.5" />
          </svg>
        </main>
      </div>
    </div>
  );
};

export default App;
